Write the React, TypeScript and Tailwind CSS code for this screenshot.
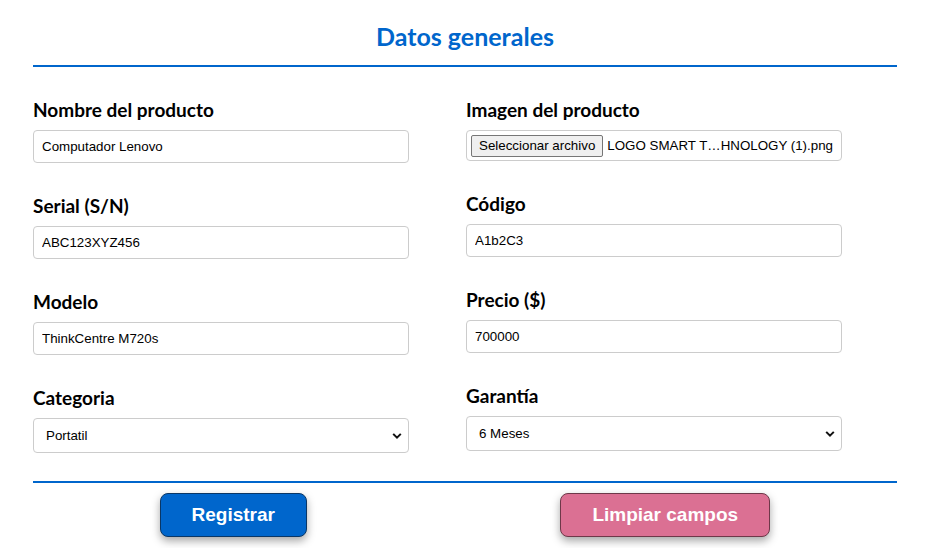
import React from "react";

function Chevron() {
  return (
    <svg width="10" height="7" viewBox="0 0 10 7" className="absolute right-[6px] top-1/2 -translate-y-1/2 pointer-events-none">
      <path d="M1.2 1.4 L5 5.2 L8.8 1.4" fill="none" stroke="#111" strokeWidth="2" />
    </svg>
  );
}

function Label({ children }: { children: React.ReactNode }) {
  return (
    <div className="text-[19px] leading-[22px] font-bold text-black mb-[9px] font-['Lato',sans-serif]">
      {children}
    </div>
  );
}

function TextField({ label, value }: { label: string; value: string }) {
  return (
    <div>
      <Label>{label}</Label>
      <input
        readOnly
        value={value}
        className="block w-[376px] h-[33px] border border-[#cccccc] rounded-[4px] px-[8px] text-[13.33px] text-black bg-white font-['Liberation_Sans',Arial,sans-serif] outline-none"
      />
    </div>
  );
}

function SelectField({ label, value }: { label: string; value: string }) {
  return (
    <div>
      <Label>{label}</Label>
      <div className="relative w-[376px] h-[35px] border border-[#cccccc] rounded-[4px] bg-white flex items-center pl-[12px] text-[13.33px] text-black font-['Liberation_Sans',Arial,sans-serif]">
        {value}
        <Chevron />
      </div>
    </div>
  );
}

function FileField({ label }: { label: string }) {
  return (
    <div>
      <Label>{label}</Label>
      <div className="w-[376px] h-[31px] border border-[#cccccc] rounded-[4px] bg-white flex items-center pl-[4px] text-[13.33px] text-black font-['Liberation_Sans',Arial,sans-serif]">
        <div className="h-[22px] px-[7px] flex items-center bg-[#efefef] border border-[#767676] rounded-[2px] whitespace-nowrap">
          Seleccionar archivo
        </div>
        <span className="ml-[4px] whitespace-nowrap">LOGO SMART T…HNOLOGY (1).png</span>
      </div>
    </div>
  );
}

export default function App() {
  return (
    <div className="w-full min-h-[548px] bg-white pl-[33px] pr-[36px] pt-[20px]">
      <h1 className="h-[32px] leading-[32px] text-[25px] font-bold text-center text-[#0066cc] font-['Lato',sans-serif]">
        Datos generales
      </h1>
      <div className="mt-[13px] h-[2px] bg-[#0066cc]" />
      <div className="mt-[32px] grid grid-cols-2">
        <div className="flex flex-col gap-[32px]">
          <TextField label="Nombre del producto" value="Computador Lenovo" />
          <TextField label="Serial (S/N)" value="ABC123XYZ456" />
          <TextField label="Modelo" value="ThinkCentre M720s" />
          <SelectField label="Categoria" value="Portatil" />
        </div>
        <div className="flex flex-col gap-[32px] pl-[1px]">
          <FileField label="Imagen del producto" />
          <TextField label="Código" value="A1b2C3" />
          <TextField label="Precio ($)" value="700000" />
          <SelectField label="Garantía" value="6 Meses" />
        </div>
      </div>
      <div className="mt-[28px] h-[2px] bg-[#0066cc]" />
      <div className="mt-[10px] flex justify-around">
        <button className="w-[147px] h-[44px] rounded-[8px] bg-[#0066cc] border border-[#0a3766] text-white text-[19px] font-bold font-['Liberation_Sans',Arial,sans-serif] shadow-[0_4px_8px_rgba(0,0,0,0.35)]">
          Registrar
        </button>
        <button className="w-[210px] h-[44px] rounded-[8px] bg-[#db7093] border border-[#6e3849] text-white text-[19px] font-bold font-['Liberation_Sans',Arial,sans-serif] shadow-[0_4px_8px_rgba(0,0,0,0.35)]">
          Limpiar campos
        </button>
      </div>
    </div>
  );
}
